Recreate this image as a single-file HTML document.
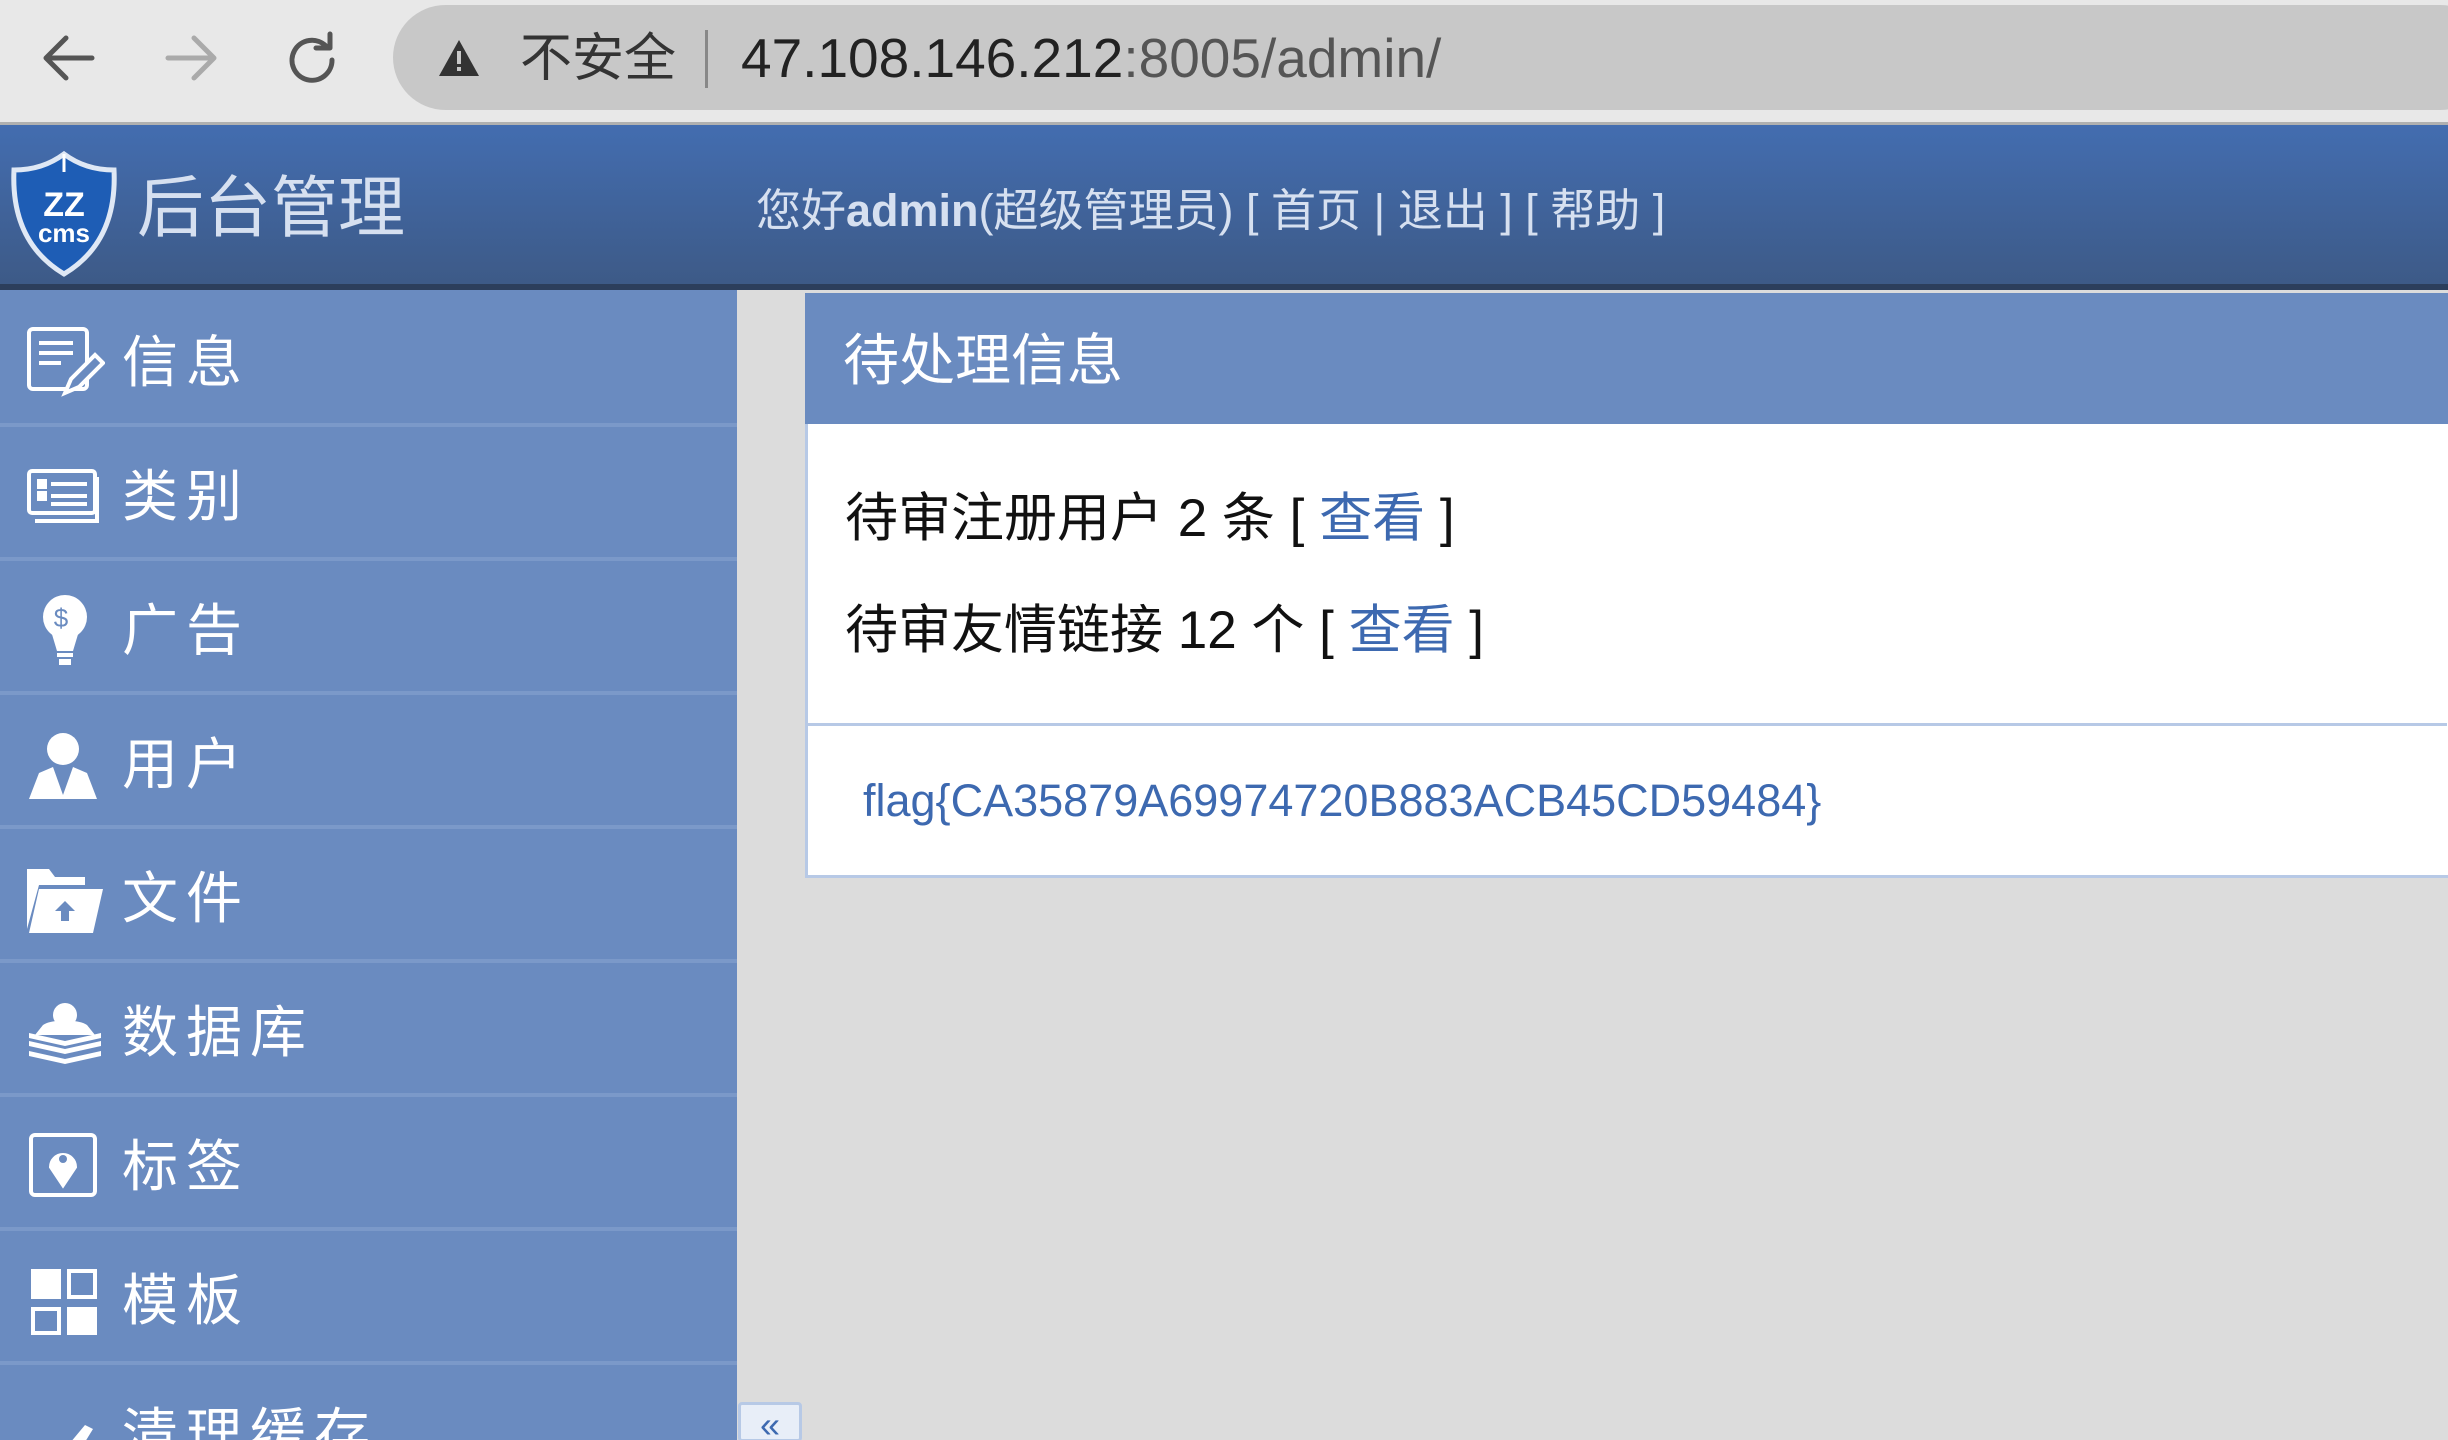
<!DOCTYPE html>
<html style="width:2448px;height:1440px;overflow:hidden"><head><meta charset="utf-8"><style>
*{margin:0;padding:0;box-sizing:border-box}
body{width:2448px;height:1440px;overflow:hidden;background:#dcdcdc;font-family:"Liberation Sans","Noto Sans CJK SC",sans-serif;position:relative}
.abs{position:absolute}
#bar{left:0;top:0;width:2448px;height:125px;background:#e8e8e8;border-bottom:3px solid #b0b0b0}
#pill{left:393px;top:5px;width:2100px;height:105px;background:#c8c8c8;border-radius:53px}
#hdr{left:0;top:125px;width:2448px;height:165px;background:linear-gradient(#436db0,#3d5a87);border-bottom:6px solid #2c3e5c}
#side{left:0;top:290px;width:737px;height:1150px;background:#6a8bc0;overflow:hidden}
.item{position:absolute;left:0;width:737px;height:134px;border-bottom:4px solid #7b99c9;color:#fff;font-size:56px;letter-spacing:8px}
.item span{position:absolute;left:122px;top:37px;line-height:66px}
.item svg{position:absolute;left:25px;top:30px}
#panel{left:805px;top:293px;width:1700px;height:585px;background:#fff;border:3px solid #b7c9e6}
#ph{left:805px;top:293px;width:1700px;height:131px;background:#6a8bc0;color:#fff;font-size:56px}
.t{font-size:53px;color:#111;line-height:60px;white-space:nowrap}
a{color:#3d69b0;text-decoration:none}
</style></head><body>
<div id="bar" class="abs"></div>
<div id="pill" class="abs"></div>
<svg class="abs" style="left:40px;top:30px" width="320" height="60" viewBox="0 0 320 60">
<g fill="none" stroke-width="5" stroke-linecap="round" stroke-linejoin="round">
<path d="M52 28H8M26 8L6 28L26 48" stroke="#555"/>
<path d="M128 28h44M154 8l20 20l-20 20" stroke="#aaa"/>
<path d="M286 16a20 20 0 1 0 6 14" stroke="#555"/><path d="M290 4v14h-14" stroke="#555"/>
</g></svg>
<svg class="abs" style="left:437px;top:38px" width="44" height="40" viewBox="0 0 44 40"><path d="M22 2L42 38H2Z" fill="#333"/><rect x="20" y="13" width="4" height="13" fill="#c8c8c8"/><rect x="20" y="29" width="4" height="4" fill="#c8c8c8"/></svg>
<div class="abs" style="left:520px;top:28px;font-size:52px;color:#333;line-height:62px">不安全</div>
<div class="abs" style="left:705px;top:30px;width:3px;height:58px;background:#888"></div>
<div class="abs" style="left:741px;top:27px;font-size:55px;color:#222;line-height:62px;white-space:nowrap">47.108.146.212<span style="color:#555">:8005/admin/</span></div>

<div id="hdr" class="abs"></div>
<svg class="abs" style="left:8px;top:150px" width="112" height="128" viewBox="0 0 112 128">
<path d="M56 4C40 16 22 20 6 20C4 62 16 100 56 124C96 100 108 62 106 20C90 20 72 16 56 4Z" fill="#1e5db5" stroke="#dfe8f5" stroke-width="5"/>
<path d="M56 4v18" stroke="#fff" stroke-width="3"/>
<text x="56" y="66" font-size="34" font-weight="bold" fill="#fff" text-anchor="middle" font-family="Liberation Sans">ZZ</text>
<text x="56" y="92" font-size="26" font-weight="bold" fill="#fff" text-anchor="middle" font-family="Liberation Sans">cms</text></svg>
<div class="abs" style="left:137px;top:170px;font-size:67px;color:#d6e0f0;line-height:78px">后台管理</div>
<div class="abs" style="left:756px;top:184px;font-size:45px;color:#d6e0f0;line-height:54px;white-space:nowrap">您好<b>admin</b>(超级管理员) [ 首页 | 退出 ] [ 帮助 ]</div>

<div id="side" class="abs">
<div class="item" style="top:3px"><svg width="80" height="80" viewBox="0 0 80 80" fill="none" stroke="#fff" stroke-width="4"><rect x="4" y="6" width="58" height="60" rx="4"/><path d="M14 20h34M14 30h34M14 40h22"/><path d="M40 70l6-14l24-24l8 8l-24 24z" fill="#6a8bc0"/></svg><span>信息</span></div>
<div class="item" style="top:137px"><svg width="80" height="80" viewBox="0 0 80 80" fill="none" stroke="#fff" stroke-width="4"><rect x="4" y="14" width="66" height="42" rx="3"/><path d="M10 64h62v-44"/><rect x="14" y="24" width="6" height="6" fill="#fff"/><rect x="14" y="36" width="6" height="6" fill="#fff"/><path d="M26 27h36M26 39h36M26 47h36"/></svg><span>类别</span></div>
<div class="item" style="top:271px"><svg width="80" height="80" viewBox="0 0 80 80"><circle cx="40" cy="26" r="22" fill="#fff"/><path d="M26 40h28l-6 20h-16z" fill="#fff"/><rect x="32" y="62" width="16" height="4" fill="#fff"/><rect x="34" y="68" width="12" height="6" fill="#fff"/><text x="40" y="36" font-size="26" text-anchor="middle" fill="#6a8bc0" font-family="Liberation Sans">$</text></svg><span>广告</span></div>
<div class="item" style="top:405px"><svg width="80" height="80" viewBox="0 0 80 80" fill="#fff"><circle cx="38" cy="24" r="16"/><path d="M4 74l10-26l14-6l10 28l10-28l14 6l10 26z"/></svg><span>用户</span></div>
<div class="item" style="top:539px"><svg width="80" height="80" viewBox="0 0 80 80" fill="#fff"><path d="M2 10h22l6 8h30v8H14L2 70z"/><path d="M14 30h64l-10 44H4z"/><path d="M40 42l-10 10h6v10h8V52h6z" fill="#6a8bc0"/></svg><span>文件</span></div>
<div class="item" style="top:673px"><svg width="80" height="80" viewBox="0 0 80 80" fill="#fff"><circle cx="40" cy="22" r="12"/><path d="M18 32c8-6 36-6 44 0l8 10H10z"/><path d="M4 48l36 8l36-8v5l-36 8l-36-8z"/><path d="M4 58l36 8l36-8v5l-36 8l-36-8z"/><path d="M4 40l36 8l36-8v5l-36 8l-36-8z"/></svg><span>数据库</span></div>
<div class="item" style="top:807px"><svg width="80" height="80" viewBox="0 0 80 80" fill="none" stroke="#fff" stroke-width="4"><rect x="6" y="8" width="64" height="60" rx="4"/><path d="M38 58l-12-18a12 12 0 1 1 24 0z" fill="#fff"/><circle cx="38" cy="32" r="4" fill="#6a8bc0" stroke="none"/></svg><span>标签</span></div>
<div class="item" style="top:941px"><svg width="80" height="80" viewBox="0 0 80 80"><rect x="6" y="8" width="30" height="30" fill="#fff"/><rect x="44" y="10" width="26" height="26" fill="none" stroke="#fff" stroke-width="4"/><rect x="8" y="48" width="26" height="24" fill="none" stroke="#fff" stroke-width="4"/><rect x="42" y="46" width="30" height="28" fill="#fff"/></svg><span>模板</span></div>
<div class="item" style="top:1075px;border:none"><svg width="90" height="80" viewBox="0 0 90 80" fill="#fff"><circle cx="8" cy="56" r="5"/><circle cx="26" cy="60" r="5"/><path d="M60 30l8 4l-16 26l-14 8l2-14z"/></svg><span>清理缓存</span></div>
</div>
<div class="abs" style="left:738px;top:1402px;width:64px;height:40px;background:#e8eef8;border:3px solid #b7c9e6;border-radius:4px;color:#3d69b0;font-size:36px;text-align:center;line-height:40px">«</div>

<div id="panel" class="abs"></div>
<div id="ph" class="abs"><span style="position:absolute;left:38px;top:36px;line-height:64px">待处理信息</span></div>
<div class="abs" style="left:807px;top:723px;width:1640px;height:3px;background:#b7c9e6"></div>
<div class="abs t" style="left:845px;top:489px">待审注册用户 2 条 [ <a>查看</a> ]</div>
<div class="abs t" style="left:845px;top:601px">待审友情链接 12 个 [ <a>查看</a> ]</div>
<div class="abs" style="left:863px;top:774px;font-size:45px;color:#3d69b0;line-height:54px;white-space:nowrap">flag{CA35879A69974720B883ACB45CD59484}</div>
</body></html>
